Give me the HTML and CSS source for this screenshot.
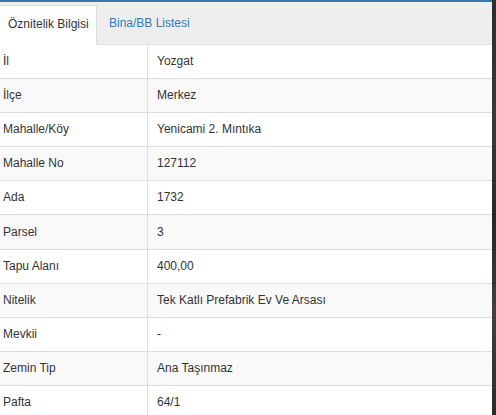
FILE: index.html
```html
<!DOCTYPE html>
<html lang="tr">
<head>
<meta charset="utf-8">
<link rel="stylesheet" href="styles.css">
</head>
<body>
<div class="frame">
  <div class="panel">
    <div class="topline"></div>
    <div class="tabs">
      <div class="tab active">Öznitelik Bilgisi</div>
      <div class="tab link">Bina/BB Listesi</div>
    </div>
    <table class="attrs">
      <tbody>
        <tr><td class="k">İl</td><td class="v">Yozgat</td></tr>
        <tr><td class="k">İlçe</td><td class="v">Merkez</td></tr>
        <tr><td class="k">Mahalle/Köy</td><td class="v">Yenicami 2. Mıntıka</td></tr>
        <tr><td class="k">Mahalle No</td><td class="v">127112</td></tr>
        <tr><td class="k">Ada</td><td class="v">1732</td></tr>
        <tr><td class="k">Parsel</td><td class="v">3</td></tr>
        <tr><td class="k">Tapu Alanı</td><td class="v">400,00</td></tr>
        <tr><td class="k">Nitelik</td><td class="v">Tek Katlı Prefabrik Ev Ve Arsası</td></tr>
        <tr><td class="k">Mevkii</td><td class="v">-</td></tr>
        <tr><td class="k">Zemin Tip</td><td class="v">Ana Taşınmaz</td></tr>
        <tr><td class="k">Pafta</td><td class="v">64/1</td></tr>
      </tbody>
    </table>
  </div>
  <div class="edge"></div>
</div>
</body>
</html>
```
FILE: styles.css
```css
html, body {
  margin: 0;
  padding: 0;
  background: #fff;
}
body {
  font-family: "Liberation Sans", Arial, sans-serif;
  font-size: 12px;
  color: #333;
  overflow: hidden;
}
.frame {
  display: flex;
  width: 496px;
  height: 415px;
  overflow: hidden;
}
.panel {
  width: 492px;
  flex: none;
  background: #fff;
}
.edge {
  flex: 1;
  background: linear-gradient(180deg, #2c2e2a 0%, #3a3a35 30%, #262824 55%, #45403a 75%, #2a2b27 100%);
}
.topline {
  height: 2px;
  background: #3a78b5;
}
.tabs {
  display: flex;
  align-items: flex-end;
  height: 42px;
  background: #eeeeee;
  border-bottom: 1px solid #dddddd;
}
.tab {
  height: 40px;
  box-sizing: border-box;
  line-height: 37px;
  margin-bottom: -1px;
  white-space: nowrap;
}
.tab.active {
  background: #fff;
  border-top: 1px solid #dddddd;
  border-right: 1px solid #dddddd;
  padding: 0 8px;
  width: 97px;
}
.tab.link {
  color: #337ab7;
  padding: 0 12px;
}
.attrs {
  width: 492px;
  border-collapse: collapse;
  table-layout: fixed;
}
.attrs tr:nth-child(even) {
  background: #f9f9f9;
}
.attrs td {
  height: 33.1px;
  padding: 0;
  border-bottom: 1px solid #dddddd;
  vertical-align: middle;
  line-height: 17px;
}
.attrs td.k {
  width: 144px;
  padding-left: 3px;
  border-right: 1px solid #dddddd;
}
.attrs td.v {
  padding-left: 9px;
}
```
